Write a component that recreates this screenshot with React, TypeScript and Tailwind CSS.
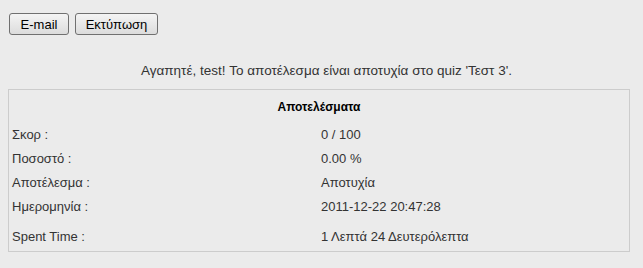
export default function App() {
  const rows: [string, string][] = [
    ['Σκορ :', '0 / 100'],
    ['Ποσοστό :', '0.00 %'],
    ['Αποτέλεσμα :', 'Αποτυχία'],
    ['Ημερομηνία :', '2011-12-22 20:47:28'],
  ];

  return (
    <div className="min-h-screen w-[643px] h-[268px] bg-[#ebebeb] px-[8px] text-[13px] text-[#222] font-['Liberation_Sans',Arial,sans-serif]">
      {/* Buttons */}
      <div className="flex gap-[6px] pt-[13px] pl-[1px]">
        <button className="h-[22px] w-[60px] rounded-[3px] border border-[#707070] bg-gradient-to-b from-[#f4f4f4] to-[#dcdcdc] text-black leading-none">
          E-mail
        </button>
        <button className="h-[22px] w-[83px] rounded-[3px] border border-[#707070] bg-gradient-to-b from-[#f4f4f4] to-[#dcdcdc] text-black leading-none">
          Εκτύπωση
        </button>
      </div>

      {/* Message */}
      <div className="h-[54px] flex items-end justify-center pb-[8px] pl-[10px] text-[#333] text-[13.5px]">
        Αγαπητέ, test! Το αποτέλεσμα είναι αποτυχία στο quiz 'Τεστ 3'.
      </div>

      {/* Results box */}
      <div className="w-[622px] border border-[#cccccc] text-[#333]">
        <div className="h-[33px] flex items-center justify-center font-bold text-black text-[12px]">
          Αποτελέσματα
        </div>
        <div className="grid grid-cols-[309px_1fr] pl-[3px] text-[13px]">
          {rows.map(([label, value]) => (
            <div key={label} className="contents">
              <div className="h-[24px] flex items-center">{label}</div>
              <div className="h-[24px] flex items-center">{value}</div>
            </div>
          ))}
          <div className="h-[32px] pt-[4px] flex items-center">Spent Time :</div>
          <div className="h-[32px] pt-[4px] flex items-center">1 Λεπτά 24 Δευτερόλεπτα</div>
        </div>
      </div>
    </div>
  );
}
